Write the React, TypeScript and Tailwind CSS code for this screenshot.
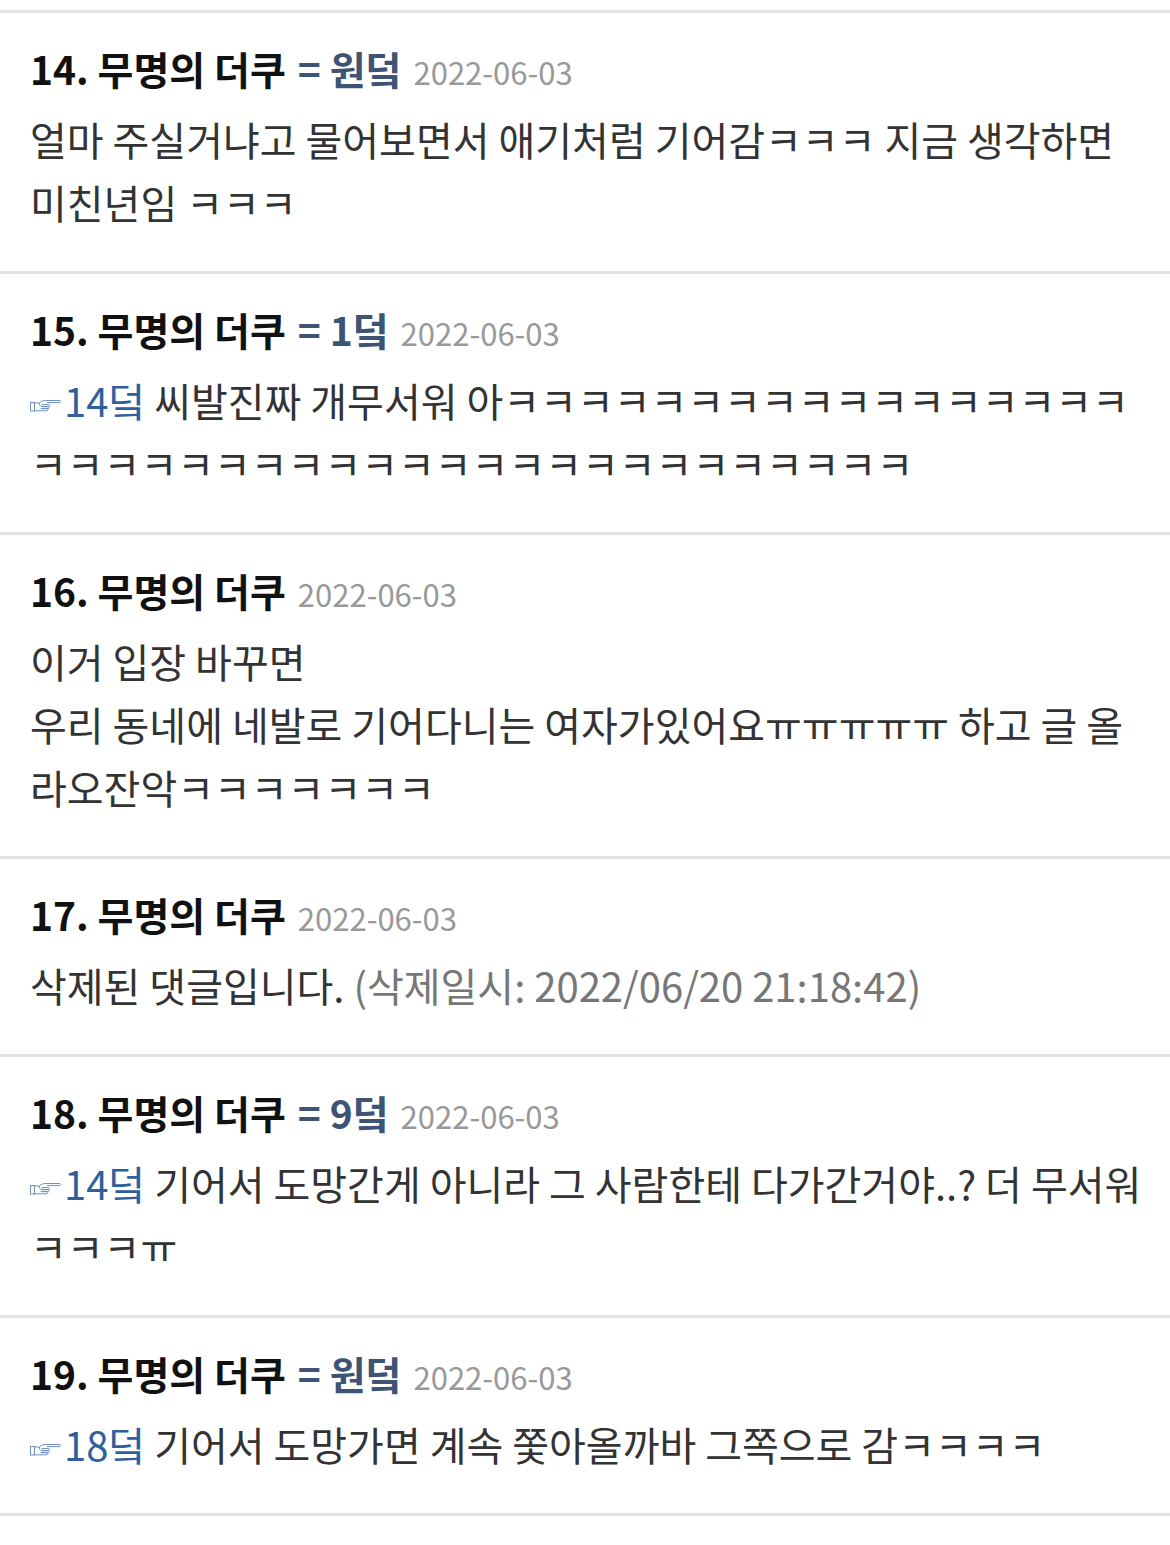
import React from 'react';

type Comment = {
  no: number;
  nick: string;
  tag?: string;
  date: string;
  reply?: string;
  text: string;
  deletedAt?: string;
};

const KK = (n: number) => 'ㅋ'.repeat(n);

const comments: Comment[] = [
  {
    no: 14,
    nick: '무명의 더쿠',
    tag: '원덬',
    date: '2022-06-03',
    text: '얼마 주실거냐고 물어보면서 애기처럼 기어감ㅋㅋㅋ 지금 생각하면 미친년임 ㅋㅋㅋ',
  },
  {
    no: 15,
    nick: '무명의 더쿠',
    tag: '1덬',
    date: '2022-06-03',
    reply: '14덬',
    text: ' 씨발진짜 개무서워 아' + KK(41),
  },
  {
    no: 16,
    nick: '무명의 더쿠',
    date: '2022-06-03',
    text: '이거 입장 바꾸면\n우리 동네에 네발로 기어다니는 여자가있어요ㅠㅠㅠㅠㅠ 하고 글 올라오잔악' + KK(7),
  },
  {
    no: 17,
    nick: '무명의 더쿠',
    date: '2022-06-03',
    text: '삭제된 댓글입니다.',
    deletedAt: '2022/06/20 21:18:42',
  },
  {
    no: 18,
    nick: '무명의 더쿠',
    tag: '9덬',
    date: '2022-06-03',
    reply: '14덬',
    text: ' 기어서 도망간게 아니라 그 사람한테 다가간거야..? 더 무서워 ㅋㅋㅋㅠ',
  },
  {
    no: 19,
    nick: '무명의 더쿠',
    tag: '원덬',
    date: '2022-06-03',
    reply: '18덬',
    text: ' 기어서 도망가면 계속 쫓아올까바 그쪽으로 감ㅋㅋㅋㅋ',
  },
];

// outlined pointing hand (☞) drawn small, like the board's reply marker
const PointHand = () => (
  <svg
    width="32"
    height="14"
    viewBox="0 0 32 14"
    fill="none"
    stroke="#6f8fbf"
    strokeWidth="1"
    className="inline align-middle mr-[2px]"
  >
    <rect x="0.5" y="3.5" width="4" height="8.5" />
    <path d="M4.5 4 H9.5 C11.5 2 13.5 1.5 15.5 1.5 H30 Q31.5 2.5 30 3.6 H17" />
    <path d="M11.5 5.6 H19 Q20.5 6.6 19 7.6 H11.5" />
    <path d="M11.5 7.6 H18.5 Q20 8.6 18.5 9.6 H11.5" />
    <path d="M10.5 9.6 H17 Q18.5 10.6 17 11.8 H4.5" />
    <path d="M9.5 4 C9 6 10 7 11.5 7.6" />
  </svg>
);

const CommentItem: React.FC<{ c: Comment }> = ({ c }) => (
  <li className="border-t-[3px] border-[#e2e2e2] pl-[30px] pr-[20px] pt-[30px] pb-[37px]">
    <div className="h-[50px] text-[39px] leading-[50px] font-bold text-[#111] whitespace-nowrap">
      <span>
        {c.no}. {c.nick}
      </span>
      {c.tag && <span className="ml-[12px] text-[#3d5474]">= {c.tag}</span>}
      <span className="ml-[12px] text-[31px] leading-none font-normal text-[#999]">{c.date}</span>
    </div>
    <p className="mt-[15px] text-[40px] leading-[63px] text-[#333] whitespace-pre-line">
      {c.reply && (
        <a className="text-[#30609c]">
          <PointHand />
          {c.reply}
        </a>
      )}
      {c.text}
      {c.deletedAt && <span className="text-[#777]"> (삭제일시: {c.deletedAt})</span>}
    </p>
  </li>
);

const App: React.FC = () => {
  return (
    <div
      className="min-h-screen w-full bg-white pt-[10px]"
      style={{ fontFamily: '"Noto Sans CJK KR", "Noto Sans", sans-serif' }}
    >
      <ul className="border-b-[3px] border-[#e2e2e2]">
        {comments.map(c => (
          <CommentItem key={c.no} c={c} />
        ))}
      </ul>
    </div>
  );
};

export default App;
